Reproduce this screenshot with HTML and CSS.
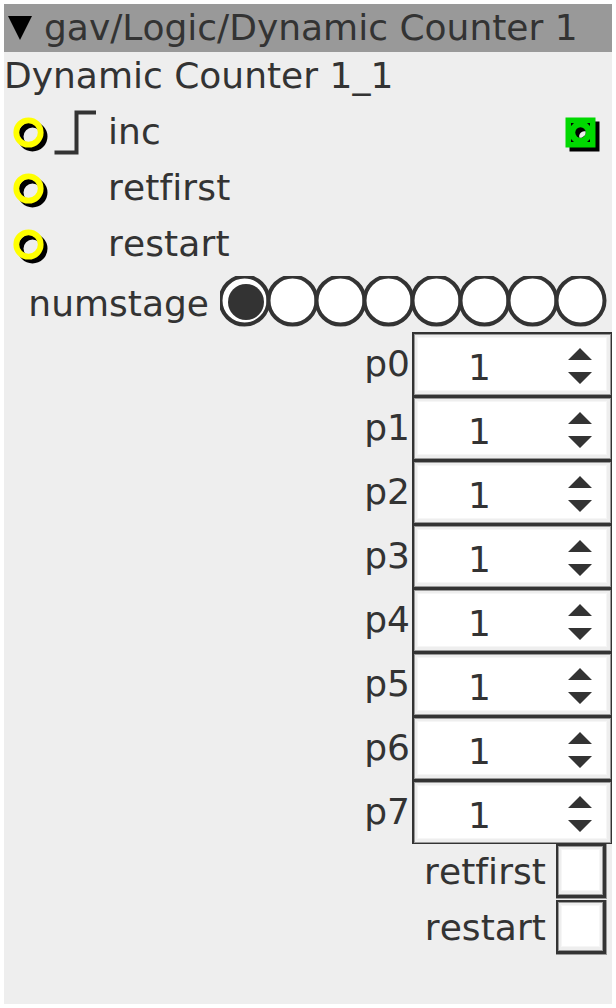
FILE: index.html
```html
<!DOCTYPE html>
<html lang="en">
<head>
<meta charset="utf-8">
<title>Dynamic Counter 1</title>
<link rel="stylesheet" href="styles.css">
</head>
<body>
<main class="panel">
  <header class="titlebar">
    <svg class="collapse" width="24" height="24" viewBox="0 0 24 24"><path d="M0 0H24L12 24Z"/></svg>
    <span class="type">gav/Logic/Dynamic Counter 1</span>
  </header>
  <div class="name">Dynamic Counter 1_1</div>
  <section id="ports" class="ports"></section>
  <div class="stage-row"><span class="stage-label">numstage</span><svg id="stages" width="388" height="60" viewBox="0 0 388 60"></svg></div>
  <section id="params"></section>
  <section id="toggles" class="toggles"></section>
</main>
<script src="app.js"></script>
</body>
</html>
```

FILE: styles.css
```css
body {
  margin: 0;
  background: #fff;
  color: #333;
  font: 36px/56px "DejaVu Sans", sans-serif;
  font-kerning: none;
  font-variant-ligatures: none;
}

svg {
  display: block;
  flex: none;
}

.panel {
  box-sizing: border-box;
  width: 608px;
  height: 1000px;
  margin: 4px;
  background: #eee;
}

.titlebar {
  display: flex;
  align-items: center;
  height: 48px;
  padding-left: 4px;
  background: #999;
  line-height: 48px;
}

.collapse {
  fill: #000;
}

.type {
  margin-left: 12px;
  white-space: nowrap;
}

.name {
  height: 52px;
  line-height: 48px;
  white-space: nowrap;
}

.port {
  display: flex;
  height: 56px;
}

.port-label {
  flex: 1;
  letter-spacing: 0.12px;
}

.stage-row {
  display: flex;
  justify-content: flex-end;
  height: 60px;
  line-height: 63px;
  padding-right: 4px;
}

.stage-label {
  margin-right: 11px;
}

.param {
  display: flex;
  justify-content: flex-end;
  height: 64px;
}

.param-label {
  line-height: 64px;
  margin-right: 2px;
}

.toggles {
  margin-right: 5px;
}

.toggle {
  display: flex;
  justify-content: flex-end;
  height: 56px;
}

.toggle-label {
  margin-right: 10px;
  letter-spacing: 0.06px;
}

.number {
  fill: #333;
}

.ink {
  fill: #333;
}

.edge {
  fill: #999;
}

.face {
  fill: #eee;
}

.rim {
  fill: #f6f6f6;
}

.paper {
  fill: #fff;
}
```

FILE: app.js
```js
const inlet = (edge) => `<svg width="104" height="56" viewBox="0 0 104 56">
  <circle cx="28.5" cy="32.5" r="12" fill="#eee" stroke="#000" stroke-width="6"/>
  <circle cx="24.5" cy="28.5" r="12.2" fill="none" stroke="#ff0" stroke-width="5.8"/>
  ${edge ? '<path d="M50.5 48.5H72.5V8.5H92" fill="none" stroke="#333" stroke-width="4"/>' : ''}
</svg>`;

const outlet = `<svg width="56" height="56" viewBox="0 0 56 56">
  <path d="M13.5 17.5h30v30h-30z"/>
  <path d="M9.5 13.5h30v30h-30z" fill="#00d900"/>
  <path d="M15 19h3l-3 3zM34 19v3l-3-3zM15 38v-3l3 3zM34 38h-3l3-3z"/>
  <circle cx="24.5" cy="28.5" r="5.2"/>
  <path d="M29.5 27.3A5.2 5.2 0 0 1 23.3 33.5A5.2 5.2 0 0 1 29.5 27.3Z" fill="#eee"/>
</svg>`;

document.getElementById('ports').innerHTML = ['inc', 'retfirst', 'restart'].map((name, i) =>
  `<div class="port">${inlet(i === 0)}<span class="port-label">${name}</span>${i === 0 ? outlet : ''}</div>`
).join('');

let circles = '<defs><clipPath id="trim"><path d="M0 4H388V60H0Z"/></clipPath></defs><g clip-path="url(#trim)">';
for (let i = 0; i < 8; i++) {
  circles += `<circle cx="${24.5 + i * 48}" cy="28.5" r="24" fill="#fff" stroke="#333" stroke-width="4"/>`;
}
circles += '<circle class="ink" cx="26" cy="30" r="18"/></g>';
document.getElementById('stages').innerHTML = circles;

const numberBox = `<svg width="200" height="64" viewBox="0 0 200 64">
  <rect class="ink" width="200" height="64"/>
  <rect class="edge" x="2" y="2" width="197" height="61"/>
  <rect class="face" x="3" y="3" width="195" height="59"/>
  <rect class="rim" x="5" y="5" width="190" height="54"/>
  <rect class="paper" x="6" y="6" width="188" height="52"/>
  <text class="number" x="56" y="48">1</text>
  <path class="ink" d="M156 28L168 16L180 28ZM156 40H180L168 52Z"/>
</svg>`;

document.getElementById('params').innerHTML = Array.from({ length: 8 }, (_, i) =>
  `<div class="param"><span class="param-label">p${i}</span>${numberBox}</div>`
).join('');

const checkbox = `<svg width="51" height="56" viewBox="0 0 51 56">
  <rect class="edge" width="51" height="55"/>
  <rect class="ink" width="50" height="54"/>
  <rect class="edge" x="2" y="2" width="45" height="49"/>
  <rect class="face" x="3" y="3" width="43" height="47"/>
  <rect class="rim" x="5" y="5" width="39" height="42"/>
  <rect class="paper" x="6" y="6" width="37" height="40"/>
</svg>`;

document.getElementById('toggles').innerHTML = ['retfirst', 'restart'].map((name) =>
  `<div class="toggle"><span class="toggle-label">${name}</span>${checkbox}</div>`
).join('');
```
